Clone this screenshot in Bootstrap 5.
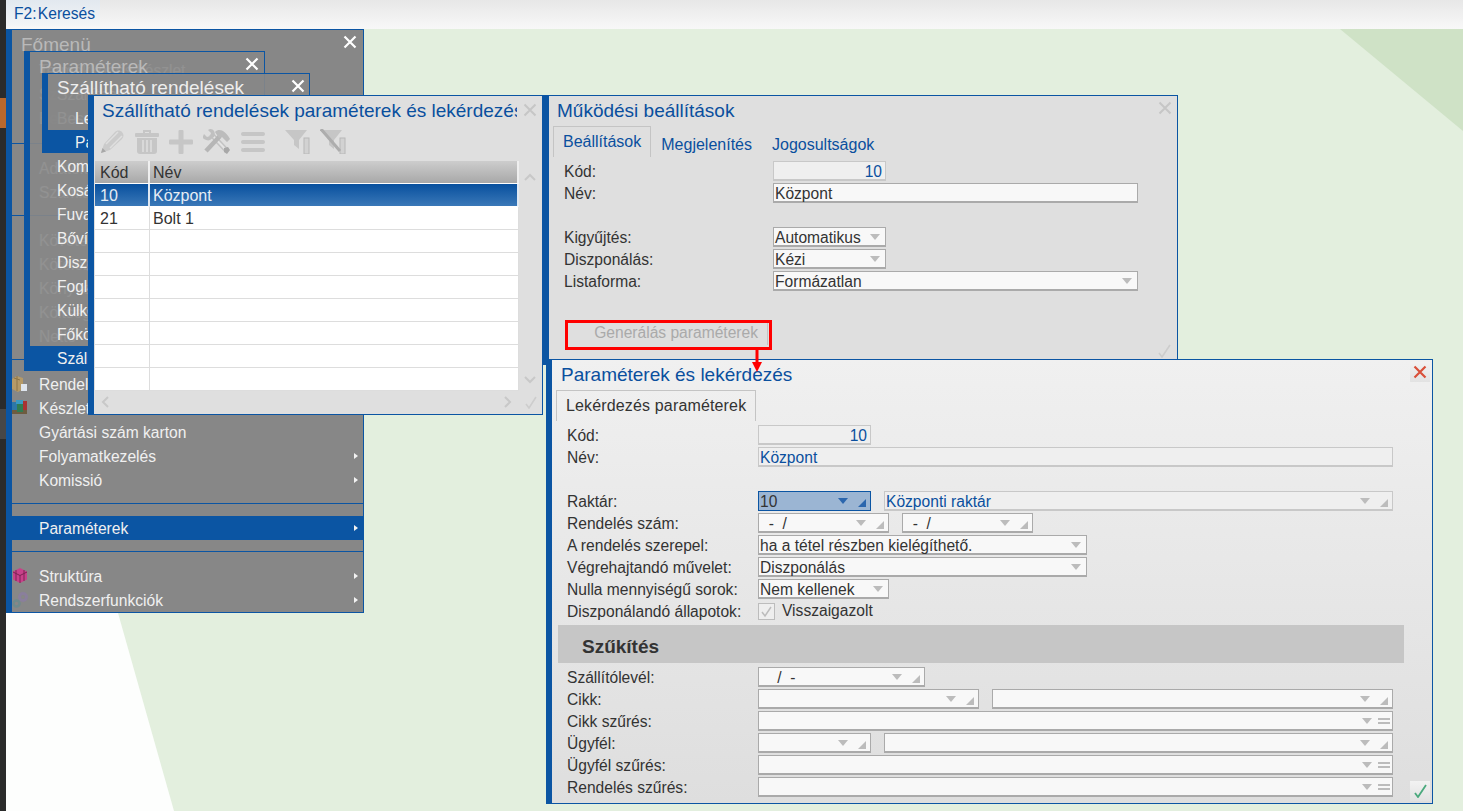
<!DOCTYPE html>
<html lang="hu">
<head>
<meta charset="utf-8">
<title>Paraméterek és lekérdezés</title>
<link href="https://cdn.jsdelivr.net/npm/bootstrap@5.3.0/dist/css/bootstrap.min.css" rel="stylesheet">
<style>
:root{--blue:#0b55a3;}
html,body{height:100%;}
body{position:relative;width:1463px;height:811px;overflow:hidden;background:#e3efde;font:15.6px/20px "Liberation Sans",Arial,sans-serif;color:#333;}
.bgart{position:absolute;left:0;top:0;width:1463px;height:811px;}
.darkstrip{position:absolute;left:0;top:0;width:6px;height:811px;background:linear-gradient(#2b2b2b 0,#2b2b2b 98px,#b9682d 98px,#b9682d 128px,#2b2b2b 128px,#2b2b2b 409px,#474747 409px,#474747 439px,#2b2b2b 439px);}
.topbar{position:absolute;left:6px;top:0;width:1457px;height:29px;background:linear-gradient(#e7e7e7,#f8f8f8);}
.f2tab{width:94px;height:26px;padding:4px 0 0 8px;background:linear-gradient(#e2e8ef,#f3f5f7);color:#0a4f9e;}
.win{position:absolute;border:1px solid var(--blue);border-left-width:6px;overflow:hidden;}
.ttl{font-size:19px;line-height:22px;white-space:nowrap;overflow:hidden;}
.xbtn{position:absolute;width:16px;height:16px;}
.w-main{left:6px;top:29px;width:358px;height:584px;background:#878787;z-index:1;}
.w-par{left:24px;top:51px;width:241px;height:320px;background:rgba(135,135,135,.9);z-index:2;}
.w-szall{left:42px;top:73px;width:268px;height:80px;background:rgba(135,135,135,.9);z-index:3;}
.w-table{left:88px;top:95px;width:455px;height:320px;background:#dfdfdf;z-index:4;}
.w-mukod{left:543px;top:95px;width:635px;height:270px;background:#dfdfdf;z-index:5;}
.w-lekerd{left:546px;top:359px;width:887px;height:445px;background:linear-gradient(#f0f0f0,#dedede);z-index:6;}
.w-main .ttl,.w-par .ttl{color:#b9b9b9;}
.w-szall .ttl{color:#eee;}
.t-main{padding:4px 0 0 9px;height:28px;}
.t-par{padding:4px 0 0 9px;height:30px;}
.t-szall{padding:3px 0 0 9px;height:32px;}
.x-main{right:5px;top:4px;}
.x-par{right:4px;top:4px;}
.x-szall{right:3px;top:4px;}
.mi{height:24px;line-height:25px;color:#f0f0f0;white-space:nowrap;position:relative;}
.mi-main{padding-left:27px;}
.mi-sub{padding-left:27px;}
.mi-on{background:var(--blue);}
.mi-arrow{position:absolute;right:5px;top:9px;border-left:4px solid #f2f2f2;border-top:3.5px solid transparent;border-bottom:3.5px solid transparent;}
.mi-ico{position:absolute;left:0;top:3px;width:16px;height:17px;}
.msep{height:24px;padding-top:11px;}
.msep-lg{height:26px;padding-top:13px;}
.msep hr{margin:0;border:0;border-top:1px solid var(--blue);opacity:1;}
.t-tab{padding:4px 0 0 8px;height:34px;width:423px;color:#0a4f9e;}
.toolrow{height:32px;padding:0 0 7px 6px;gap:10px;margin-top:-1px;}
.ms-funnel{margin-left:10px;}
.gridwrap{margin-left:1px;width:424px;}
.grid.table{margin:0;table-layout:fixed;width:424px;--bs-table-bg:transparent;border-collapse:separate;border-spacing:0;font-size:16px;}
.grid.table>:not(caption)>*>*{padding:1px 0 0 5px;height:23px;line-height:21px;border:0;border-bottom:1px solid #ddd;border-right:1px solid #ddd;box-shadow:none;background:#fff;color:#333;}
.grid.table>:not(caption)>*>*+*{padding-left:3px;}
.grid.table>thead>tr>th{font-weight:400;background:linear-gradient(#cdcdcd,#a8a8a8);border-bottom:1px solid #fff;border-right:2px solid #efefef;}
.grid.table>tbody>tr.sel>td{background:linear-gradient(#08509e,#3a78b8);color:#e6edf5;border-bottom:1px solid #fff;border-right:2px solid #dfe8f2;}
.grid .c1{width:55px;}
.t-muk{padding:4px 0 0 8px;height:30px;color:#0a4f9e;}
.t-lek{padding:4px 0 0 9px;height:30px;color:#0a4f9e;}
.tabs.nav{border:0;padding-left:4px;height:31px;flex-wrap:nowrap;font-size:16px;}
.tabs .nav-link{padding:0 10px;border:0;border-radius:0;color:#0a4f9e;line-height:32px;height:31px;background:transparent;}
.tabs .nav-link.active{border:1px solid #c4c4c4;border-bottom:0;padding:0 9px;background:transparent;color:#0a4f9e;line-height:30px;}
.tabs .nav-link.plain{padding-top:3px;}
.w-lekerd .tabs .nav-link.active{color:#333;letter-spacing:.15px;}
.form-area{padding:4px 0 0 15px;}
.frow{height:20px;margin-bottom:2px;position:relative;}
.lab{position:absolute;left:0;top:1px;white-space:nowrap;}
.fields{margin-left:209px;gap:13px;}
.w-lekerd .fields{margin-left:191px;}
.fspace{height:22px;}
.fld{height:20px;border:1px solid #aaa;border-bottom-width:2px;border-right-width:1.5px;background:#f8f8f8;line-height:16px;padding:2px 8px 0 1px;white-space:nowrap;color:#333;}
.fld.dis{background:#efefef;border-color:#c8c8c8;color:#0a4f9e;}
.fld.foc{background:#9bb5d3;border:1px solid var(--blue);padding-right:8px;}
.fld.tar{justify-content:flex-end;padding-right:3px;}
.w113{width:113px;}.w131{width:131px;}.w329{width:329px;}.w365{width:365px;}.w635{width:635px;}.w509{width:509px;}.w167{width:167px;}.w221{width:221px;}.w401{width:401px;}
.dd{width:0;height:0;border-left:5px solid transparent;border-right:5px solid transparent;border-top:6px solid #bcbcbc;margin-left:auto;margin-top:-2px;flex:none;}
.dd-solo{margin-right:-3px;}
.dd-blue{border-top-color:#2b66ad;}
.cr{width:0;height:0;border-left:8px solid transparent;border-bottom:8px solid #bcbcbc;margin-left:10px;margin-top:2px;flex:none;margin-right:-4px;}
.cr-blue{border-bottom-color:#2b66ad;}
.eq{width:12px;height:6px;border-top:2px solid #bcbcbc;border-bottom:2px solid #bcbcbc;margin-left:6px;margin-top:-2px;flex:none;margin-right:-6px;}
.chk{width:17px;height:17px;border:1px solid #bcbcbc;margin-right:7px;flex:none;background:#eee;}
.chk-wrap{gap:0;}
.gen-btn{margin:27px 0 0 8px;width:196px;height:25px;border:0;border-right:1px solid #c4c4c4;background:transparent;color:#aaa;font:inherit;text-align:right;padding:1px 9px 0 0;line-height:20px;}
.szuk{margin:4px 29px 4px -9px;height:38px;width:846px;background:#c6c6c6;font-weight:700;font-size:19px;line-height:43px;padding-left:24px;color:#333;}
.redbox{position:absolute;left:565px;top:320px;width:207px;height:30px;border:3px solid #f00;z-index:8;}
.redarrow{position:absolute;left:750px;top:350px;width:14px;height:24px;z-index:8;}
.cornerbtn{position:absolute;width:20px;height:20px;background:linear-gradient(#f2f2f2,#e2e2e2);z-index:7;}
.abs-svg{position:absolute;}
.xt{left:429px;top:7px;}
.sc-up{left:430px;top:77px;}.sc-dn{left:430px;top:280px;}.sc-lf{left:7px;top:300px;}.sc-rt{left:410px;top:300px;}.sc-ok{left:431px;top:300px;}
.xm{left:609px;top:5px;}.okm{left:609px;top:248px;}
.cb-x{left:1410px;top:362px;}.cb-ok{left:1410px;top:781px;}
</style>
</head>
<body>
<svg class="bgart" viewBox="0 0 1463 811" aria-hidden="true">
  <polygon points="1340,29 1463,29 1463,131" fill="#cfe2c6"/>
  <polygon points="6,540 100,540 118,613 174,811 6,811" fill="#fdfefd"/>
</svg>
<div class="darkstrip"></div>
<div class="topbar d-flex"><div class="f2tab">F2:&#8202;Keresés</div></div>

<div class="win w-main">
  <div class="ttl t-main">Főmenü</div>
  <svg class="xbtn x-main" viewBox="0 0 16 16"><path d="M2.500 2.500 13.500 13.500M13.500 2.500 2.500 13.500" stroke="#fff" stroke-width="2.200" fill="none"/></svg>
  <div class="mi mi-main">Termékkör és készlet</div>
  <div class="mi mi-main">Szállítások</div>
  <div class="mi mi-main">Beszerzés</div>
  <div class="msep msep-lg"><hr></div>
  <div class="mi mi-main">Adatok</div>
  <div class="mi mi-main">Számlák</div>
  <div class="msep"><hr></div>
  <div class="mi mi-main">Követelés</div>
  <div class="mi mi-main">Kötelezettség</div>
  <div class="mi mi-main">Könyvelés</div>
  <div class="mi mi-main">Költségek</div>
  <div class="mi mi-main">Nettó</div>
  <div class="msep"><hr></div>
  <div class="mi mi-main">
    <svg class="mi-ico" viewBox="0 0 16 17"><path d="M0 4 5 1l6 2v11l-5 3-6-3z" fill="#b59a68"/><path d="M5 1v15M2 3l6 2" stroke="#8c7448" fill="none"/><path d="M9 9h6v7H9z" fill="#dfe6ef"/></svg>Rendelések</div>
  <div class="mi mi-main">
    <svg class="mi-ico" viewBox="0 0 16 17"><path d="M0 3h8v8H0z" fill="#2d78a8"/><path d="M8 2h7v9H8z" fill="#a93232"/><path d="M0 11h15v4H0z" fill="#6d5c40"/><path d="M5 5h6v8H5z" fill="#2f7d53"/><path d="M4 1h7v4H4z" fill="#3a9ac4"/></svg>Készletek</div>
  <div class="mi mi-main">Gyártási szám karton</div>
  <div class="mi mi-main">Folyamatkezelés<span class="mi-arrow"></span></div>
  <div class="mi mi-main">Komissió<span class="mi-arrow"></span></div>
  <div class="msep"><hr></div>
  <div class="mi mi-main mi-on">Paraméterek<span class="mi-arrow"></span></div>
  <div class="msep"><hr></div>
  <div class="mi mi-main">
    <svg class="mi-ico" viewBox="0 0 16 17"><path d="M8 1l7 3.500v8L8 16l-7-3.500v-8z" fill="#c8408a"/><path d="M1 5l7 3.500L15 5M8 8.500V16M4 3v11M12 3v11" stroke="#7c2253" fill="none"/></svg>Struktúra<span class="mi-arrow"></span></div>
  <div class="mi mi-main">
    <svg class="mi-ico" viewBox="0 0 16 17"><circle cx="11" cy="6" r="3.500" fill="none" stroke="#8a7f9c" stroke-width="3"/><circle cx="4.500" cy="12.500" r="3" fill="none" stroke="#6f8a8c" stroke-width="2.500"/></svg>Rendszerfunkciók<span class="mi-arrow"></span></div>
</div>

<div class="win w-par">
  <div class="ttl t-par">Paraméterek</div>
  <svg class="xbtn x-par" viewBox="0 0 16 16"><path d="M2.500 2.500 13.500 13.500M13.500 2.500 2.500 13.500" stroke="#fff" stroke-width="2.200" fill="none"/></svg>
  <div class="mi mi-sub">Szállítható</div>
  <div class="mi mi-sub">Beszállítók</div>
  <div class="mi mi-sub">Előrendelés</div>
  <div class="mi mi-sub">Komissiózás</div>
  <div class="mi mi-sub">Kosár</div>
  <div class="mi mi-sub">Fuvarozás</div>
  <div class="mi mi-sub">Bővített</div>
  <div class="mi mi-sub">Diszponálás</div>
  <div class="mi mi-sub">Foglalás</div>
  <div class="mi mi-sub">Külkereskedelem</div>
  <div class="mi mi-sub">Főkönyv</div>
  <div class="mi mi-sub mi-on">Szállítható rendelések</div>
</div>

<div class="win w-szall">
  <div class="ttl t-szall">Szállítható rendelések</div>
  <svg class="xbtn x-szall" viewBox="0 0 16 16"><path d="M2.500 2.500 13.500 13.500M13.500 2.500 2.500 13.500" stroke="#fff" stroke-width="2.200" fill="none"/></svg>
  <div class="mi mi-sub">Lekérdezés</div>
  <div class="mi mi-sub mi-on">Paraméterek</div>
</div>

<div class="win w-table">
  <div class="ttl t-tab">Szállítható rendelések paraméterek és lekérdezés</div>
  <svg class="abs-svg xt" viewBox="0 0 14 14" width="14" height="14"><path d="M1.500 1.500 12.500 12.500M12.500 1.500 1.500 12.500" stroke="#c6c6c6" stroke-width="2" fill="none"/></svg>
  <div class="d-flex align-items-center toolrow">
    <svg width="25" height="25" viewBox="0 0 25 25" fill="#cbcbcb"><path d="M1 24l3-9L15 3c2-2 5-2 7 0s2 5 0 7L10 21z"/><path d="M6 15 18 3M10 19 22 7" stroke="#dfdfdf" stroke-width="1.500"/><path d="M1 24l1.500-5 3.500 3.500z" fill="#a8a8a8"/></svg>
    <svg width="24" height="25" viewBox="0 0 24 25" fill="#c6c6c6"><path d="M8 1h8v3h-2V3h-4v1H8z"/><rect x="0" y="4" width="24" height="4" rx="1"/><path d="M2 9h20v13c0 2-1 3-3 3H5c-2 0-3-1-3-3z"/><path d="M8 11v12M12 11v12M16 11v12" stroke="#dfdfdf" stroke-width="1.500"/></svg>
    <svg width="24" height="24" viewBox="0 0 24 24" fill="#c6c6c6"><rect x="9.500" y="0" width="5" height="24" rx="1"/><rect x="0" y="9.500" width="24" height="5" rx="1"/></svg>
    <svg width="28" height="27" viewBox="0 0 28 27"><path d="M8 6 24 23" stroke="#c2c2c2" stroke-width="5"/><path d="M8 6 24 23" stroke="#e4e4e4" stroke-width="2"/><path d="M1 6l3 3 3-1 1-3-3-3c2-2 5-1 6 1s1 4 0 6l-4 3c-2 1-4 0-6-1S0 8 1 6z" fill="#c0c0c0"/><path d="M3 23 17 8" stroke="#b6b6b6" stroke-width="4.500"/><path d="M12 4c4-4 10-2 15 7l-3 3-5-5-3 1z" fill="#bcbcbc"/><path d="M21 20l4-1 2 3-3 4-3-2z" fill="#a8a8a8"/></svg>
    <svg width="24" height="20" viewBox="0 0 24 20" fill="#c6c6c6"><rect width="24" height="4" y="0" rx="2"/><rect width="24" height="4" y="8" rx="2"/><rect width="24" height="4" y="16" rx="2"/></svg>
    <svg width="25" height="25" viewBox="0 0 25 25" class="ms-funnel"><path d="M0 1h22l-8 10v9l-5-4v-5z" fill="#c6c6c6"/><rect x="19" y="9" width="5" height="16" fill="#d2d2d2" stroke="#b8b8b8"/></svg>
    <svg width="26" height="25" viewBox="0 0 26 25"><path d="M0 1h22l-8 10v9l-5-4v-5z" fill="#c6c6c6"/><rect x="20" y="9" width="5" height="16" fill="#d2d2d2" stroke="#b8b8b8"/><path d="M1 0 20 22" stroke="#adadad" stroke-width="3"/></svg>
  </div>
  <div class="gridwrap">
    <table class="table grid">
      <thead><tr><th class="c1">Kód</th><th>Név</th></tr></thead>
      <tbody>
        <tr class="sel"><td>10</td><td>Központ</td></tr>
        <tr><td>21</td><td>Bolt 1</td></tr>
        <tr><td></td><td></td></tr><tr><td></td><td></td></tr><tr><td></td><td></td></tr>
        <tr><td></td><td></td></tr><tr><td></td><td></td></tr><tr><td></td><td></td></tr><tr><td></td><td></td></tr>
      </tbody>
    </table>
  </div>
  <svg class="abs-svg sc-up" width="12" height="8" viewBox="0 0 12 8"><path d="M1 7l5-5 5 5" stroke="#c8c8c8" stroke-width="2" fill="none"/></svg>
  <svg class="abs-svg sc-dn" width="12" height="8" viewBox="0 0 12 8"><path d="M1 1l5 5 5-5" stroke="#c8c8c8" stroke-width="2" fill="none"/></svg>
  <svg class="abs-svg sc-lf" width="8" height="12" viewBox="0 0 8 12"><path d="M7 1 2 6l5 5" stroke="#c8c8c8" stroke-width="2" fill="none"/></svg>
  <svg class="abs-svg sc-rt" width="8" height="12" viewBox="0 0 8 12"><path d="M1 1l5 5-5 5" stroke="#c8c8c8" stroke-width="2" fill="none"/></svg>
  <svg class="abs-svg sc-ok" width="12" height="13" viewBox="0 0 12 13"><path d="M1 8l3 4 7-11" stroke="#cdcdcd" stroke-width="1.600" fill="none"/></svg>
</div>

<div class="win w-mukod">
  <div class="ttl t-muk">Működési beállítások</div>
  <svg class="abs-svg xm" viewBox="0 0 14 14" width="14" height="14"><path d="M1.500 1.500 12.500 12.500M12.500 1.500 1.500 12.500" stroke="#c6c6c6" stroke-width="2" fill="none"/></svg>
  <ul class="nav tabs">
    <li class="nav-item"><a class="nav-link active" href="#">Beállítások</a></li>
    <li class="nav-item"><a class="nav-link plain" href="#">Megjelenítés</a></li>
    <li class="nav-item"><a class="nav-link plain" href="#">Jogosultságok</a></li>
  </ul>
  <div class="form-area">
    <div class="frow d-flex"><span class="lab">Kód:</span><div class="fields d-flex"><div class="fld dis d-flex tar w113">10</div></div></div>
    <div class="frow d-flex"><span class="lab">Név:</span><div class="fields d-flex"><div class="fld w365">Központ</div></div></div>
    <div class="fspace"></div>
    <div class="frow d-flex"><span class="lab">Kigyűjtés:</span><div class="fields d-flex"><div class="fld d-flex align-items-center w113">Automatikus<i class="dd dd-solo"></i></div></div></div>
    <div class="frow d-flex"><span class="lab">Diszponálás:</span><div class="fields d-flex"><div class="fld d-flex align-items-center w113">Kézi<i class="dd dd-solo"></i></div></div></div>
    <div class="frow d-flex"><span class="lab">Listaforma:</span><div class="fields d-flex"><div class="fld d-flex align-items-center w365">Formázatlan<i class="dd dd-solo"></i></div></div></div>
    <button class="gen-btn" type="button">Generálás paraméterek</button>
  </div>
  <svg class="abs-svg okm" width="14" height="14" viewBox="0 0 14 14"><path d="M1 9l3 4 8-12" stroke="#cdcdcd" stroke-width="1.600" fill="none"/></svg>
</div>

<div class="win w-lekerd">
  <div class="ttl t-lek">Paraméterek és lekérdezés</div>
  <ul class="nav tabs">
    <li class="nav-item"><a class="nav-link active" href="#">Lekérdezés paraméterek</a></li>
  </ul>
  <div class="form-area">
    <div class="frow d-flex"><span class="lab">Kód:</span><div class="fields d-flex"><div class="fld dis d-flex tar w113">10</div></div></div>
    <div class="frow d-flex"><span class="lab">Név:</span><div class="fields d-flex"><div class="fld dis w635">Központ</div></div></div>
    <div class="fspace"></div>
    <div class="frow d-flex"><span class="lab">Raktár:</span><div class="fields d-flex">
      <div class="fld foc d-flex align-items-center w113">10<i class="dd dd-blue"></i><i class="cr cr-blue"></i></div>
      <div class="fld dis d-flex align-items-center w509">Központi raktár<i class="dd"></i><i class="cr"></i></div></div></div>
    <div class="frow d-flex"><span class="lab">Rendelés szám:</span><div class="fields d-flex">
      <div class="fld d-flex align-items-center w131">&nbsp;&nbsp;-&nbsp;&nbsp;/<i class="dd"></i><i class="cr"></i></div>
      <div class="fld d-flex align-items-center w131">&nbsp;&nbsp;-&nbsp;&nbsp;/<i class="dd"></i><i class="cr"></i></div></div></div>
    <div class="frow d-flex"><span class="lab">A rendelés szerepel:</span><div class="fields d-flex"><div class="fld d-flex align-items-center w329">ha a tétel részben kielégíthető.<i class="dd dd-solo"></i></div></div></div>
    <div class="frow d-flex"><span class="lab">Végrehajtandó művelet:</span><div class="fields d-flex"><div class="fld d-flex align-items-center w329">Diszponálás<i class="dd dd-solo"></i></div></div></div>
    <div class="frow d-flex"><span class="lab">Nulla mennyiségű sorok:</span><div class="fields d-flex"><div class="fld d-flex align-items-center w131">Nem kellenek<i class="dd dd-solo"></i></div></div></div>
    <div class="frow d-flex"><span class="lab">Diszponálandó állapotok:</span><div class="fields chk-wrap d-flex align-items-center">
      <svg class="chk" viewBox="0 0 15 15"><path d="M3 8l3 4 6-9" stroke="#bcbcbc" stroke-width="1.500" fill="none"/></svg><span>Visszaigazolt</span></div></div>
    <div class="szuk">Szűkítés</div>
    <div class="frow d-flex"><span class="lab">Szállítólevél:</span><div class="fields d-flex"><div class="fld d-flex align-items-center w167">&nbsp;&nbsp;&nbsp;&nbsp;/&nbsp;&nbsp;-<i class="dd"></i><i class="cr"></i></div></div></div>
    <div class="frow d-flex"><span class="lab">Cikk:</span><div class="fields d-flex">
      <div class="fld d-flex align-items-center w221"><i class="dd"></i><i class="cr"></i></div>
      <div class="fld d-flex align-items-center w401"><i class="dd"></i><i class="cr"></i></div></div></div>
    <div class="frow d-flex"><span class="lab">Cikk szűrés:</span><div class="fields d-flex"><div class="fld d-flex align-items-center w635"><i class="dd"></i><i class="eq"></i></div></div></div>
    <div class="frow d-flex"><span class="lab">Ügyfél:</span><div class="fields d-flex">
      <div class="fld d-flex align-items-center w113"><i class="dd"></i><i class="cr"></i></div>
      <div class="fld d-flex align-items-center w509"><i class="dd"></i><i class="cr"></i></div></div></div>
    <div class="frow d-flex"><span class="lab">Ügyfél szűrés:</span><div class="fields d-flex"><div class="fld d-flex align-items-center w635"><i class="dd"></i><i class="eq"></i></div></div></div>
    <div class="frow d-flex"><span class="lab">Rendelés szűrés:</span><div class="fields d-flex"><div class="fld d-flex align-items-center w635"><i class="dd"></i><i class="eq"></i></div></div></div>
  </div>
</div>

<div class="cornerbtn d-flex align-items-center justify-content-center cb-x"><svg width="14" height="14" viewBox="0 0 14 14"><path d="M1.500 1.500 12.500 12.500M12.500 1.500 1.500 12.500" stroke="#d9503a" stroke-width="2.200" fill="none"/></svg></div>
<div class="cornerbtn d-flex align-items-center justify-content-center cb-ok"><svg width="13" height="14" viewBox="0 0 13 14"><path d="M1 9l3 4 8-12" stroke="#4aa97d" stroke-width="1.800" fill="none"/></svg></div>

<div class="redbox"></div>
<svg class="redarrow" viewBox="0 0 14 24"><path d="M7 0v14" stroke="#f00" stroke-width="3"/><path d="M2 12h10l-5 10z" fill="#f00"/></svg>
</body>
</html>
